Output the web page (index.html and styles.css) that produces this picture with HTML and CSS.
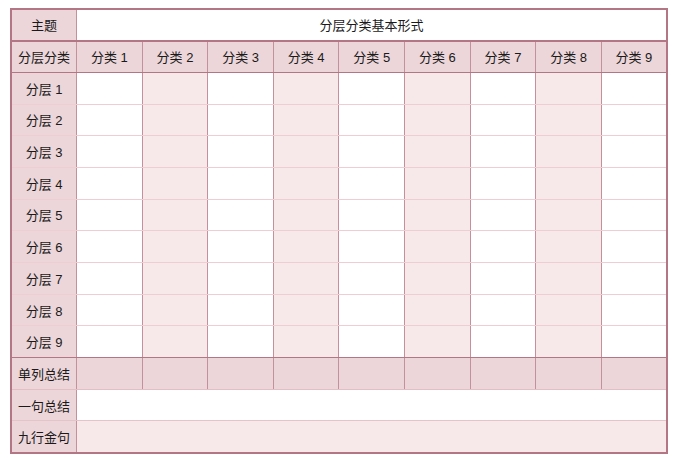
FILE: index.html
```html
<!DOCTYPE html>
<html lang="zh">
<head>
<meta charset="utf-8">
<link rel="stylesheet" href="styles.css">
</head>
<body>
<table class="grid">
  <colgroup>
    <col class="c-head"><col><col class="c-alt"><col><col class="c-alt"><col><col class="c-alt"><col><col class="c-alt"><col>
  </colgroup>
  <tr class="r-title"><th>主题</th><td colspan="9" class="title">分层分类基本形式</td></tr>
  <tr class="r-head"><th>分层分类</th><th>分类 1</th><th>分类 2</th><th>分类 3</th><th>分类 4</th><th>分类 5</th><th>分类 6</th><th>分类 7</th><th>分类 8</th><th>分类 9</th></tr>
  <tr><th>分层 1</th><td></td><td></td><td></td><td></td><td></td><td></td><td></td><td></td><td></td></tr>
  <tr><th>分层 2</th><td></td><td></td><td></td><td></td><td></td><td></td><td></td><td></td><td></td></tr>
  <tr><th>分层 3</th><td></td><td></td><td></td><td></td><td></td><td></td><td></td><td></td><td></td></tr>
  <tr><th>分层 4</th><td></td><td></td><td></td><td></td><td></td><td></td><td></td><td></td><td></td></tr>
  <tr><th>分层 5</th><td></td><td></td><td></td><td></td><td></td><td></td><td></td><td></td><td></td></tr>
  <tr><th>分层 6</th><td></td><td></td><td></td><td></td><td></td><td></td><td></td><td></td><td></td></tr>
  <tr><th>分层 7</th><td></td><td></td><td></td><td></td><td></td><td></td><td></td><td></td><td></td></tr>
  <tr><th>分层 8</th><td></td><td></td><td></td><td></td><td></td><td></td><td></td><td></td><td></td></tr>
  <tr class="r-last"><th>分层 9</th><td></td><td></td><td></td><td></td><td></td><td></td><td></td><td></td><td></td></tr>
  <tr class="r-sum"><th>单列总结</th><td></td><td></td><td></td><td></td><td></td><td></td><td></td><td></td><td></td></tr>
  <tr class="r-one"><th>一句总结</th><td colspan="9"></td></tr>
  <tr class="r-gold"><th>九行金句</th><td colspan="9"></td></tr>
</table>
</body>
</html>
```
FILE: styles.css
```css
html, body {
  margin: 0;
  padding: 0;
  background: #ffffff;
}
body {
  padding: 8px 0 0 10px;
  font-family: "Liberation Sans", "Noto Sans CJK SC", sans-serif;
  font-size: 13px;
  color: #1a1a1a;
}
.grid {
  border-collapse: collapse;
  table-layout: fixed;
  width: 656px;
  border: 2px solid #b27684;
}
.grid col { width: 65.6px; }
.c-head { background: #ecd6d9; }
.c-alt { background: #f7e8ea; }
.grid tr { height: 31.7px; }
.grid th, .grid td {
  padding: 0;
  text-align: center;
  vertical-align: middle;
  font-weight: normal;
  border-left: 1px solid #c3909b;
  border-right: 1px solid #c3909b;
  border-top: 1px solid #efcdd2;
  border-bottom: 1px solid #efcdd2;
}
.grid th { border-right-color: #c3909b; }
.r-title th, .r-title td { border-bottom: 2px solid #b27684; }
.r-title td { background: #ffffff; }
.r-head th { background: #ecd6d9; border-bottom: 1px solid #b27684; }
.r-last th, .r-last td { border-bottom: 1px solid #b27684; }
.r-sum th, .r-sum td { background: #ecd6d9; border-bottom: 1px solid #e3bfc5; }
.r-one td { background: #ffffff; }
.r-gold td { background: #f7e8ea; }
.r-one th, .r-one td { border-bottom: 1px solid #e6c3c9; }
```
